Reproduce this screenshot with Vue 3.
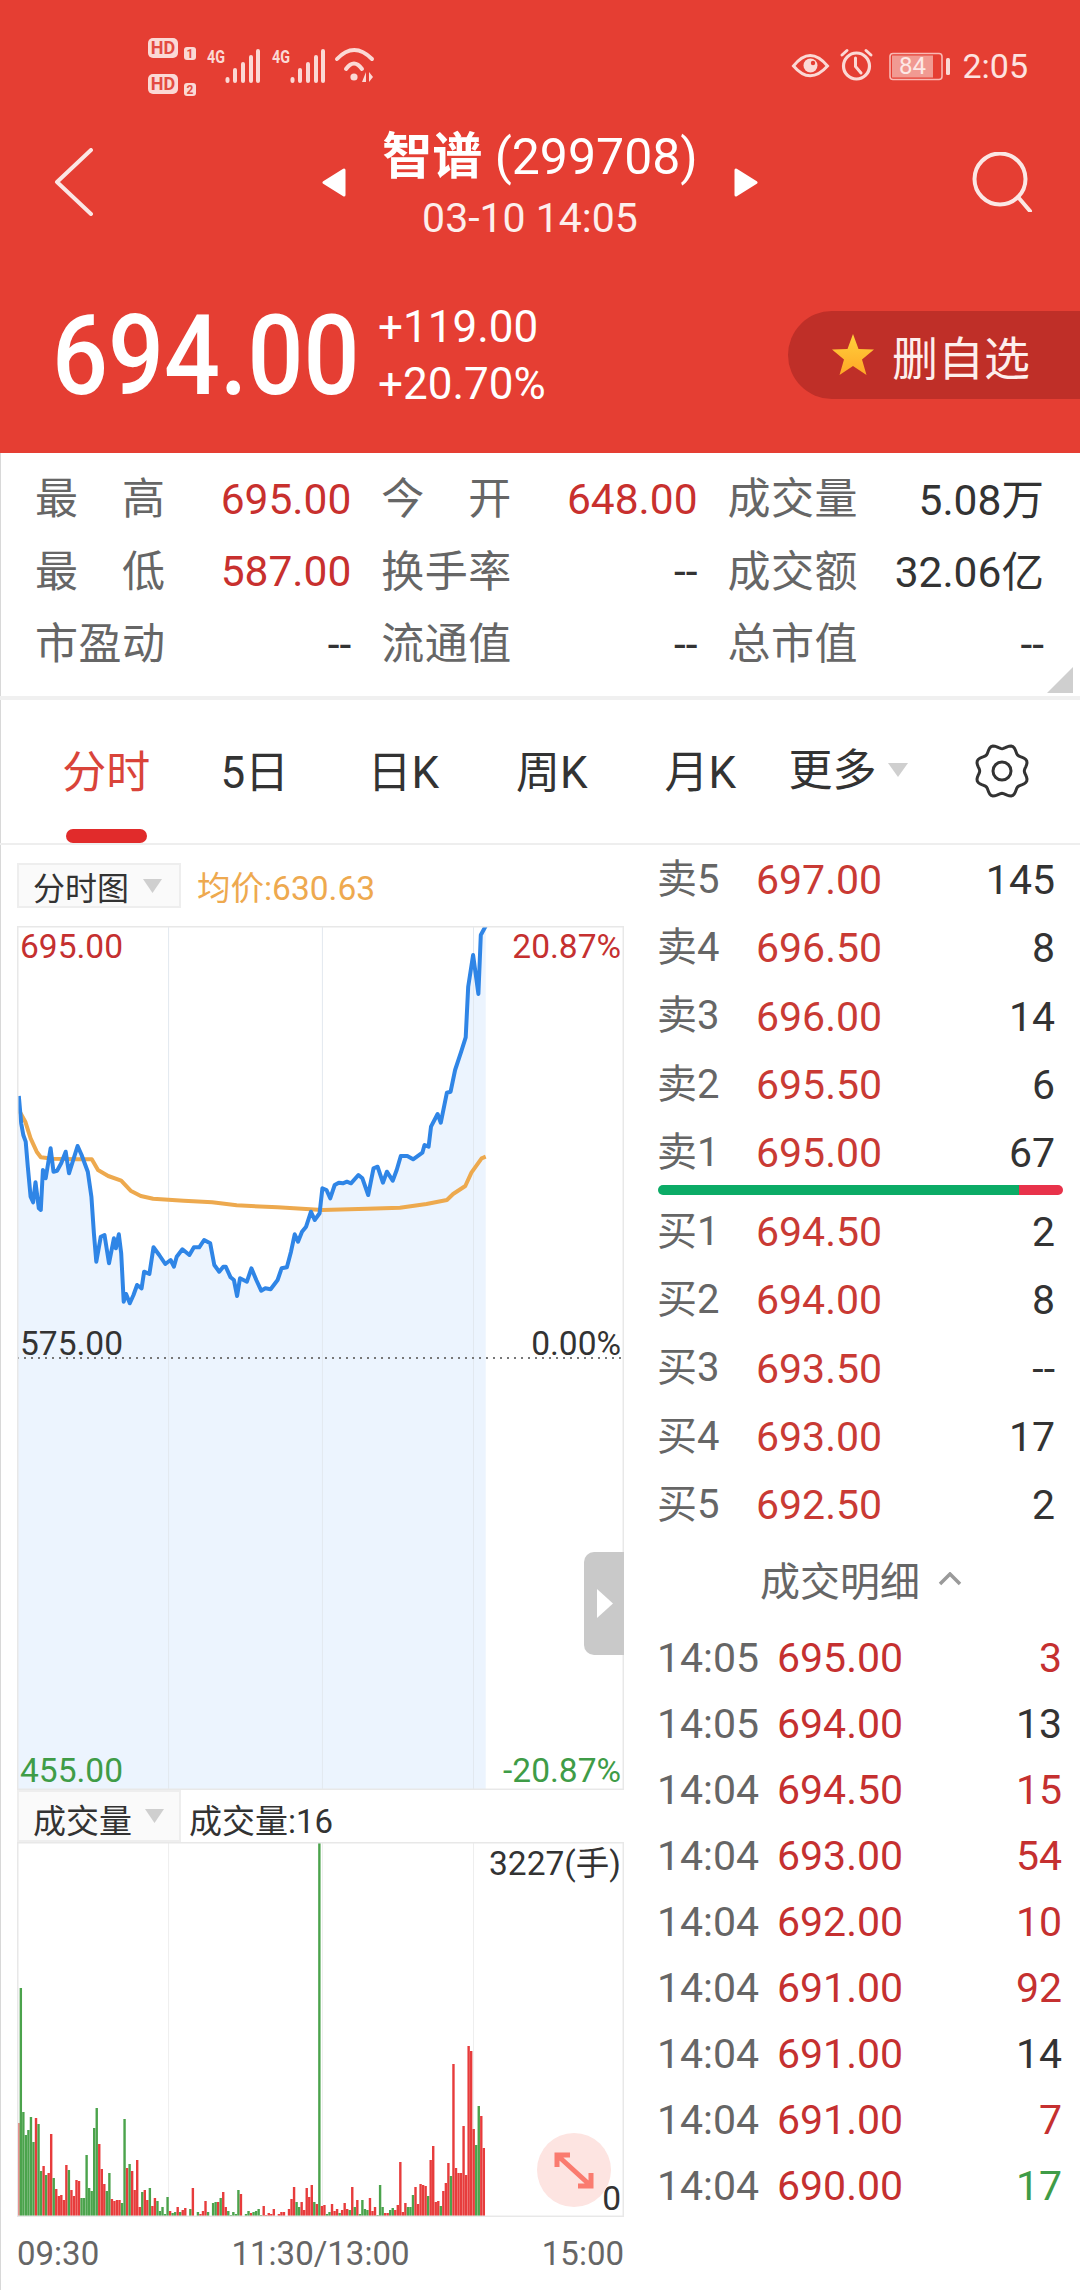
<script setup>
const mapLine = (pts) => pts.map(([p, q]) => [+(p / 2.45 - 17).toFixed(1), +(q / 3 - 26).toFixed(1)])
const blueRaw = [[46,588],[52,670],[57,705],[63,725],[68,800],[75,890],[81,907],[87,847],[95,925],[100,930],[105,810],[112,835],[124,745],[131,815],[140,812],[150,790],[161,755],[169,820],[178,785],[190,738],[200,765],[215,815],[224,890],[230,1000],[236,1085],[247,1010],[256,1005],[267,1090],[279,1015],[284,1045],[291,1003],[297,1060],[303,1205],[309,1182],[318,1210],[327,1185],[336,1155],[347,1165],[353,1115],[366,1122],[376,1042],[390,1065],[405,1092],[418,1080],[426,1100],[433,1070],[447,1048],[464,1065],[475,1042],[488,1042],[500,1020],[515,1030],[525,1095],[537,1115],[547,1100],[553,1100],[565,1132],[573,1140],[581,1188],[588,1135],[605,1145],[616,1105],[628,1140],[640,1172],[650,1165],[663,1168],[680,1140],[690,1105],[703,1102],[713,1055],[722,1003],[730,1025],[740,995],[750,980],[762,935],[771,960],[783,940],[790,865],[800,870],[809,895],[820,855],[830,848],[840,850],[850,845],[860,850],[878,825],[888,835],[902,885],[915,805],[925,800],[938,848],[948,815],[962,842],[972,810],[982,768],[998,768],[1012,778],[1035,758],[1040,735],[1050,740],[1056,680],[1072,642],[1080,668],[1095,578],[1104,575],[1115,510],[1130,455],[1141,412],[1147,260],[1159,165],[1172,282],[1178,105],[1190,78]]
const orangeRaw = [[46,630],[62,665],[75,715],[90,755],[100,772],[130,776],[190,778],[225,778],[240,810],[265,828],[297,842],[320,872],[345,888],[375,896],[450,902],[520,907],[580,916],[680,922],[790,930],[900,926],[980,923],[1045,912],[1095,900],[1110,882],[1140,858],[1155,818],[1180,775],[1190,770]]
const blue = mapLine(blueRaw)
const bluePoints = blue.map((p) => p.join(',')).join(' ')
const orangePoints = mapLine(orangeRaw).map((p) => p.join(',')).join(' ')
const fillPoints = `0,${blue[0][1]} ${bluePoints} ${blue[blue.length - 1][0]},864 0,864`
const gridX = [151.6, 305.4, 456.5]

// positive: red bar, negative: green bar
const volumes = [94,-229,-105,-82,-87,-100,-75,99,-93,-46,51,-42,44,83,-39,28,21,22,17,52,-47,27,21,37,36,-19,-19,-62,-29,-26,-89,-109,73,48,33,-26,-44,18,16,17,17,-14,-98,49,-53,46,27,57,10,-25,27,17,-29,11,19,-16,-6,-10,-3,-20,6,-4,-5,10,-5,7,9,-1,-8,29,-1,-5,3,6,16,-5,1,-14,-15,15,-19,25,10,-6,-2,-5,-3,-27,23,1,-3,-6,
  4,-5,-6,-8,-2,11,2,4,3,8,1,3,5,5,1,8,18,30,-15,-10,15,7,29,20,32,-15,13,-374,11,12,-3,-5,13,6,8,-4,7,14,8,-7,30,-10,17,-3,-17,-8,-7,19,6,10,-2,-32,-10,4,4,-7,-9,7,12,55,5,14,-10,-10,-22,30,13,33,32,31,-21,57,71,15,16,-11,26,34,54,-41,153,49,44,44,91,42,171,166,88,-72,-111,101,69,1]
const bars = volumes.map((v, i) => ({
  x: +(0.1 + i * 2.53).toFixed(2),
  y: 375 - Math.abs(v),
  h: Math.abs(v),
  fill: v < 0 ? '#4ba34c' : '#e73c3c',
}))

const gearPath = (() => {
  let d = ''
  for (let a = 0; a < 360; a += 4) {
    const t = (a * Math.PI) / 180
    const r = 24.5 - 2.2 * Math.cos(8 * t)
    d += `${a ? 'L' : 'M'}${(28 + r * Math.sin(t)).toFixed(2)},${(27 - r * Math.cos(t)).toFixed(2)}`
  }
  return d + 'Z'
})()

const stats = [
  { label: '最 高', value: '695.00', up: true },
  { label: '今 开', value: '648.00', up: true },
  { label: '成交量', value: '5.08万', mixed: true },
  { label: '最 低', value: '587.00', up: true },
  { label: '换手率', value: '--' },
  { label: '成交额', value: '32.06亿', mixed: true },
  { label: '市盈动', value: '--' },
  { label: '流通值', value: '--' },
  { label: '总市值', value: '--' },
]
const tabs = ['分时', '5日', '日K', '周K', '月K']
const sells = [['卖5', '697.00', '145'], ['卖4', '696.50', '8'], ['卖3', '696.00', '14'], ['卖2', '695.50', '6'], ['卖1', '695.00', '67']]
const buys = [['买1', '694.50', '2'], ['买2', '694.00', '8'], ['买3', '693.50', '--'], ['买4', '693.00', '17'], ['买5', '692.50', '2']]
const trades = [
  ['14:05', '695.00', '3', 'up'], ['14:05', '694.00', '13', ''], ['14:04', '694.50', '15', 'up'],
  ['14:04', '693.00', '54', 'up'], ['14:04', '692.00', '10', 'up'], ['14:04', '691.00', '92', 'up'],
  ['14:04', '691.00', '14', ''], ['14:04', '691.00', '7', 'up'], ['14:04', '690.00', '17', 'down'],
]
</script>

<template>
  <div class="sheet">
    <header class="head">
      <div class="status">
        <svg class="status-left" width="240" height="70" viewBox="145 30 240 70">
          <g fill="#fbd9d5">
            <rect x="148" y="38" width="30" height="20" rx="5" />
            <rect x="148" y="74" width="30" height="20" rx="5" />
            <rect x="184" y="47" width="12" height="13" rx="3" />
            <rect x="184" y="83" width="12" height="13" rx="3" />
          </g>
          <g class="st-hd" fill="#e34b41">
            <text x="163" y="54" text-anchor="middle" font-size="18">HD</text>
            <text x="163" y="90" text-anchor="middle" font-size="18">HD</text>
            <text x="190" y="58" text-anchor="middle" font-size="12">1</text>
            <text x="190" y="94" text-anchor="middle" font-size="12">2</text>
          </g>
          <g class="st-hd" fill="#fbd9d5" font-size="18">
            <text x="207" y="63" textLength="18" lengthAdjust="spacingAndGlyphs">4G</text>
            <text x="272" y="63" textLength="18" lengthAdjust="spacingAndGlyphs">4G</text>
          </g>
          <g stroke="#fbd9d5" stroke-width="4" stroke-linecap="round" fill="none">
            <path d="M227.500 79V81M235 70V81M243 64V81M251 57V81M258 51V81" />
            <path d="M292.500 79V81M300 70V81M308 64V81M316 57V81M323 51V81" />
            <path d="M337 59Q354 41 372 59M346 69Q354 58 362 69" />
          </g>
          <circle cx="354" cy="77" r="3.600" fill="#fbd9d5" />
          <path d="M366 72V82H362ZM369 72V82L373 77Z" fill="#fbd9d5" />
        </svg>
        <svg class="status-right" width="160" height="40" viewBox="790 46 160 40">
          <path d="M793.500 66Q810 45 827.500 66Q810 85.500 793.500 66Z" fill="none" stroke="#fbd9d5" stroke-width="3" />
          <circle cx="810.500" cy="65.500" r="7" fill="#fbd9d5" />
          <circle cx="813" cy="63" r="2.200" fill="#e53e33" />
          <circle cx="856.500" cy="66" r="13" fill="none" stroke="#fbd9d5" stroke-width="3.200" />
          <path d="M855.500 58V66.500L861 73M842 55L847 50.500M871 55L866 50.500" fill="none" stroke="#fbd9d5" stroke-width="3" stroke-linecap="round" />
          <rect x="890" y="53.500" width="52" height="26" rx="3" fill="none" stroke="#f9b9b3" stroke-width="1.600" />
          <rect x="892" y="55.500" width="41" height="22" fill="#f19a92" />
          <rect x="946" y="58" width="4" height="17" rx="1.500" fill="#fbd9d5" />
        </svg>
        <span class="batt-num">84</span>
        <span class="clock">2:05</span>
      </div>

      <nav class="nav">
        <div class="nav-side">
          <svg width="40" height="68" viewBox="0 0 40 68" class="back">
            <path d="M37 2L3 34L37 66" fill="none" stroke="#fbe7e5" stroke-width="4" stroke-linecap="round" stroke-linejoin="round" />
          </svg>
        </div>
        <div class="nav-center">
          <svg width="24" height="29" viewBox="0 0 24 29"><path d="M22 2V27L2 14.500Z" fill="#fff" stroke="#fff" stroke-width="3" stroke-linejoin="round" /></svg>
          <div class="title-block">
            <div class="title"><b>智谱</b> (299708)</div>
            <div class="date">03-10 14:05</div>
          </div>
          <svg width="24" height="29" viewBox="0 0 24 29"><path d="M2 2V27L22 14.500Z" fill="#fff" stroke="#fff" stroke-width="3" stroke-linejoin="round" /></svg>
        </div>
        <div class="nav-side nav-end">
          <svg width="61" height="60" viewBox="0 0 61 60">
            <circle cx="28" cy="27" r="25.500" fill="none" stroke="#fbe7e5" stroke-width="4" />
            <path d="M46 45L58 59" stroke="#fbe7e5" stroke-width="4" stroke-linecap="round" />
          </svg>
        </div>
      </nav>

      <div class="quote">
        <div class="price">694.00</div>
        <div class="delta">
          <div>+119.00</div>
          <div>+20.70%</div>
        </div>
        <div class="watch">
          <svg width="44" height="44" viewBox="0 0 44 44">
            <defs>
              <linearGradient id="starFill" x1="0" y1="0" x2="0" y2="1">
                <stop offset="0" stop-color="#ffd23c" />
                <stop offset="1" stop-color="#ffa726" />
              </linearGradient>
            </defs>
            <path d="M22 1L27.500 16L43 16.500L31 26.500L35.500 42L22 33L8.500 42L13 26.500L1 16.500L16.500 16Z" fill="url(#starFill)" />
          </svg>
          <span>删自选</span>
        </div>
      </div>
    </header>

    <section class="stats">
      <div v-for="s in stats" :key="s.label" class="stat">
        <span class="stat-label">{{ s.label }}</span>
        <span class="stat-value" :class="{ up: s.up, mixed: s.mixed }">{{ s.value }}</span>
      </div>
      <svg class="corner" width="27" height="26" viewBox="0 0 27 26"><path d="M26 0V26H0Z" fill="#cfcfcf" /></svg>
    </section>

    <section class="tabs">
      <div v-for="(t, i) in tabs" :key="t" class="tab" :class="{ active: i === 0 }">
        <span>{{ t }}</span>
        <i v-if="i === 0" class="tab-bar"></i>
      </div>
      <div class="more">
        <span>更多</span>
        <svg width="20" height="14" viewBox="0 0 20 14"><path d="M0 0H20L10 14Z" fill="#cfcfcf" /></svg>
      </div>
      <svg class="gear" width="56" height="54" viewBox="0 0 56 54">
        <path :d="gearPath" fill="none" stroke="#333" stroke-width="3" />
        <circle cx="28" cy="27" r="9" fill="none" stroke="#333" stroke-width="3" />
      </svg>
    </section>

    <main class="body">
      <div class="charts">
        <div class="chart-head first">
          <div class="picker">
            <span>分时图</span>
            <svg width="19" height="14" viewBox="0 0 19 14"><path d="M0 0H19L9.500 14Z" fill="#cfcfcf" /></svg>
          </div>
          <span class="avg">均价:630.63</span>
        </div>

        <div class="plot price-plot">
          <svg width="607" height="864" viewBox="0 0 607 864">
            <polygon :points="fillPoints" fill="#ecf4fe" />
            <line v-for="x in gridX" :key="x" :x1="x" :x2="x" y1="0" y2="864" stroke="#e2e8ef" stroke-width="1" />
            <polyline :points="orangePoints" fill="none" stroke="#eda94e" stroke-width="4" stroke-linejoin="round" />
            <polyline :points="bluePoints" fill="none" stroke="#2f85e6" stroke-width="4" stroke-linejoin="round" />
            <line x1="0" x2="607" y1="432" y2="432" stroke="#777" stroke-width="2" stroke-dasharray="2 5" />
            <rect x="0.750" y="0.750" width="605.500" height="862.500" fill="none" stroke="#e8e8e8" stroke-width="1.500" />
          </svg>
          <span class="tag tl up">695.00</span>
          <span class="tag tr up">20.87%</span>
          <span class="tag ml">575.00</span>
          <span class="tag mr">0.00%</span>
          <span class="tag bl down">455.00</span>
          <span class="tag br down">-20.87%</span>
          <div class="handle">
            <svg width="16" height="29" viewBox="0 0 16 29"><path d="M0 0L16 14.500L0 29Z" fill="#fff" /></svg>
          </div>
        </div>

        <div class="chart-head">
          <div class="picker vol">
            <span>成交量</span>
            <svg width="19" height="14" viewBox="0 0 19 14"><path d="M0 0H19L9.500 14Z" fill="#cfcfcf" /></svg>
          </div>
          <span class="vol-now">成交量:16</span>
        </div>

        <div class="plot vol-plot">
          <svg width="607" height="375" viewBox="0 0 607 375">
            <line v-for="x in gridX" :key="x" :x1="x" :x2="x" y1="0" y2="375" stroke="#eee" stroke-width="1" />
            <rect v-for="(b, i) in bars" :key="i" :x="b.x" :y="b.y" width="2.400" :height="b.h" :fill="b.fill" />
            <rect x="0.750" y="0.750" width="605.500" height="373.500" fill="none" stroke="#e8e8e8" stroke-width="1.500" />
          </svg>
          <span class="tag vol-max">3227(手)</span>
          <span class="tag vol-zero">0</span>
          <div class="expand">
            <svg width="42" height="40" viewBox="0 0 42 40">
              <path d="M4 5L38 36M4 17V5H17M38 23V36H25" fill="none" stroke="#fa7b6f" stroke-width="5" />
            </svg>
          </div>
        </div>

        <div class="axis">
          <span>09:30</span>
          <span>11:30/13:00</span>
          <span>15:00</span>
        </div>
      </div>

      <aside class="book">
        <div v-for="r in sells" :key="r[0]" class="level">
          <span class="lv-name">{{ r[0] }}</span>
          <span class="lv-price">{{ r[1] }}</span>
          <span class="lv-qty">{{ r[2] }}</span>
        </div>
        <div class="ratio"><i class="ratio-buy"></i><i class="ratio-sell"></i></div>
        <div class="buys">
          <div v-for="r in buys" :key="r[0]" class="level">
            <span class="lv-name">{{ r[0] }}</span>
            <span class="lv-price">{{ r[1] }}</span>
            <span class="lv-qty">{{ r[2] }}</span>
          </div>
        </div>
        <div class="detail-head">
          <span>成交明细</span>
          <svg width="24" height="14" viewBox="0 0 24 14"><path d="M2 12L12 2L22 12" fill="none" stroke="#9a9a9a" stroke-width="3.500" /></svg>
        </div>
        <div v-for="(t, i) in trades" :key="i" class="trade">
          <span class="tr-time">{{ t[0] }}</span>
          <span class="tr-price">{{ t[1] }}</span>
          <span class="tr-qty" :class="t[3]">{{ t[2] }}</span>
        </div>
      </aside>
    </main>
  </div>
</template>

<style scoped>
.sheet {
  width: 1080px;
  height: 2290px;
  overflow: hidden;
  background: #fff;
  box-shadow: inset 1px 0 0 #d8d8d8;
  font-family: Roboto, "Noto Sans CJK SC", sans-serif;
  color: #333;
}
.head {
  height: 453px;
  background: #e53e33;
  color: #fff;
}
.status {
  height: 100px;
  display: flex;
  position: relative;
}
.status-left {
  margin: 30px 0 0 145px;
}
.status-right {
  position: absolute;
  left: 790px;
  top: 46px;
}
.batt-num {
  position: absolute;
  left: 892px;
  top: 50px;
  width: 41px;
  text-align: center;
  font-size: 24px;
  line-height: 32px;
  color: #fde8e6;
}
.clock {
  position: absolute;
  right: 52px;
  top: 46px;
  font-size: 34px;
  line-height: 40px;
  color: #fde3e0;
}
.nav {
  height: 160px;
  display: grid;
  grid-template-columns: 1fr auto 1fr;
}
.nav-side {
  padding: 48px 0 0 54px;
}
.nav-end {
  display: flex;
  justify-content: flex-end;
  padding: 52px 47px 0 0;
}
.nav-center {
  display: flex;
  align-items: flex-start;
  padding-top: 68px;
  gap: 36px;
}
.title-block {
  margin-top: -41px;
  text-align: center;
}
.title {
  font-size: 50px;
  line-height: 60px;
  white-space: nowrap;
  color: #fff;
}
.date {
  margin: 6px 20px 0 0;
  font-size: 41px;
  line-height: 50px;
  white-space: nowrap;
  color: #fdeeec;
}
.quote {
  height: 193px;
  padding-top: 51px;
  box-sizing: border-box;
  display: flex;
  align-items: flex-start;
}
.price {
  width: 304px;
  margin: -5px 22px 0 52px;
  font-size: 112px;
  font-weight: 500;
  line-height: 100px;
  transform: scaleX(0.88);
  transform-origin: left center;
  white-space: nowrap;
}
.delta {
  margin-top: -12px;
  font-size: 44px;
  line-height: 57px;
  white-space: nowrap;
}
.watch {
  position: absolute;
  left: 788px;
  top: 311px;
  width: 292px;
  height: 88px;
  box-sizing: border-box;
  padding-left: 43px;
  display: flex;
  align-items: center;
  gap: 17px;
  border-radius: 44px 0 0 44px;
  background: #bf2f28;
  font-size: 46px;
  color: #fdeeec;
}
.stats {
  position: relative;
  height: 247px;
  box-sizing: border-box;
  padding: 10px 34px 0 35px;
  border-bottom: 4px solid #f0f0f0;
  display: grid;
  grid-template-columns: repeat(3, 316.300px);
  grid-auto-rows: 72.500px;
  column-gap: 30px;
}
.stat {
  display: flex;
  align-items: center;
  justify-content: space-between;
  font-size: 42.500px;
}
.stat-label {
  width: 130px;
  margin-bottom: 8px;
  font-size: 43px;
  text-align-last: justify;
  color: #666;
}
.stat-value {
  color: #333;
}
.stat-value.mixed {
  margin-bottom: 6px;
}
.stat-value.up {
  color: #c8302e;
}
.corner {
  position: absolute;
  right: 6px;
  bottom: 3px;
}
.tabs {
  height: 145px;
  box-sizing: border-box;
  padding-left: 32px;
  border-bottom: 2px solid #eee;
  display: flex;
}
.tab {
  width: 148.500px;
  display: flex;
  flex-direction: column;
  align-items: center;
  padding-top: 43px;
  box-sizing: border-box;
  font-size: 44px;
  line-height: 60px;
}
.tab.active {
  color: #d9443a;
}
.tab-bar {
  width: 81px;
  height: 14px;
  margin-top: auto;
  border-radius: 7px;
  background: #e12b2b;
}
.more {
  display: flex;
  align-items: center;
  gap: 11px;
  height: 60px;
  margin: 37px 0 0 14px;
  font-size: 44px;
}
.more svg {
  margin-top: 6px;
}
.gear {
  margin: 44px 0 0 66px;
}
.body {
  display: flex;
}
.charts {
  width: 624px;
  padding-left: 17px;
  flex: none;
}
.chart-head {
  height: 52px;
  display: flex;
  align-items: center;
  font-size: 33px;
}
.chart-head.first {
  height: 45px;
  margin-top: 18px;
  margin-bottom: 18px;
}
.picker {
  width: 164px;
  height: 100%;
  box-sizing: border-box;
  border: 2px solid #eee;
  background: #fafafa;
  display: flex;
  align-items: center;
  padding-left: 14px;
  gap: 14px;
  font-size: 32px;
}
.picker.vol {
  font-size: 33px;
  gap: 13px;
}
.picker.vol span {
  margin-top: 6px;
}
.avg {
  margin-left: 16px;
  font-size: 33.500px;
  color: #eea94f;
}
.vol-now {
  margin: 6px 0 0 8px;
}
.plot {
  position: relative;
  width: 607px;
}
.plot > svg:first-child {
  display: block;
}
.price-plot {
  height: 864px;
}
.vol-plot {
  height: 375px;
}
.tag {
  position: absolute;
  font-size: 33.500px;
  line-height: 40px;
  white-space: nowrap;
}
.up {
  color: #c53030;
}
.down {
  color: #3f9c47;
}
.tl { left: 3px; top: 1px; }
.tr { right: 3px; top: 1px; }
.ml { left: 3px; top: 398px; }
.mr { right: 3px; top: 398px; }
.bl { left: 3px; top: 825px; }
.br { right: 3px; top: 825px; }
.handle {
  position: absolute;
  right: 0;
  top: 626px;
  width: 40px;
  height: 103px;
  border-radius: 10px 0 0 10px;
  background: #c9c9c9;
  display: flex;
  align-items: center;
  padding-left: 13px;
  box-sizing: border-box;
}
.vol-max { right: 3px; top: 2px; }
.vol-zero { right: 3px; top: 337px; }
.expand {
  position: absolute;
  left: 520px;
  top: 291px;
  width: 74px;
  height: 74px;
  border-radius: 50%;
  background: #fde4e1;
  display: flex;
  align-items: center;
  justify-content: center;
}
.axis {
  width: 607px;
  display: flex;
  justify-content: space-between;
  margin-top: 17px;
  font-size: 33px;
  line-height: 40px;
  color: #666;
}
.book {
  flex: 1;
  padding-left: 16px;
  font-size: 40px;
}
.level {
  height: 68.300px;
  display: flex;
  align-items: center;
  padding-right: 25px;
}
.lv-name {
  width: 99px;
  margin-bottom: 7px;
  color: #666;
}
.lv-price {
  margin-top: 2px;
  font-size: 41px;
  color: #c93a34;
}
.lv-qty {
  margin: 2px 0 0 auto;
  font-size: 41px;
  color: #333;
}
.ratio {
  display: flex;
  width: 405px;
  height: 10px;
  margin: -1.500px 0 0 1px;
  border-radius: 5px;
  overflow: hidden;
}
.ratio-buy {
  width: 361px;
  background: #0bab66;
}
.ratio-sell {
  flex: 1;
  background: #e8324a;
}
.buys {
  margin-top: 2px;
}
.detail-head {
  height: 87px;
  display: flex;
  align-items: center;
  padding: 0 0 5px 103px;
  box-sizing: border-box;
  gap: 18px;
  color: #666;
}
.trade {
  height: 66px;
  display: flex;
  align-items: center;
  padding-right: 18px;
  font-size: 41px;
}
.tr-time {
  width: 120px;
  color: #666;
}
.tr-price {
  color: #c53030;
}
.tr-qty {
  margin-left: auto;
  color: #333;
}
.tr-qty.up {
  color: #c53030;
}
.tr-qty.down {
  color: #3f9c47;
}
.st-hd {
  font-family: Roboto, sans-serif;
  font-weight: 700;
}
</style>

<style>
html, body {
  margin: 0;
  background: #fff;
}
</style>
